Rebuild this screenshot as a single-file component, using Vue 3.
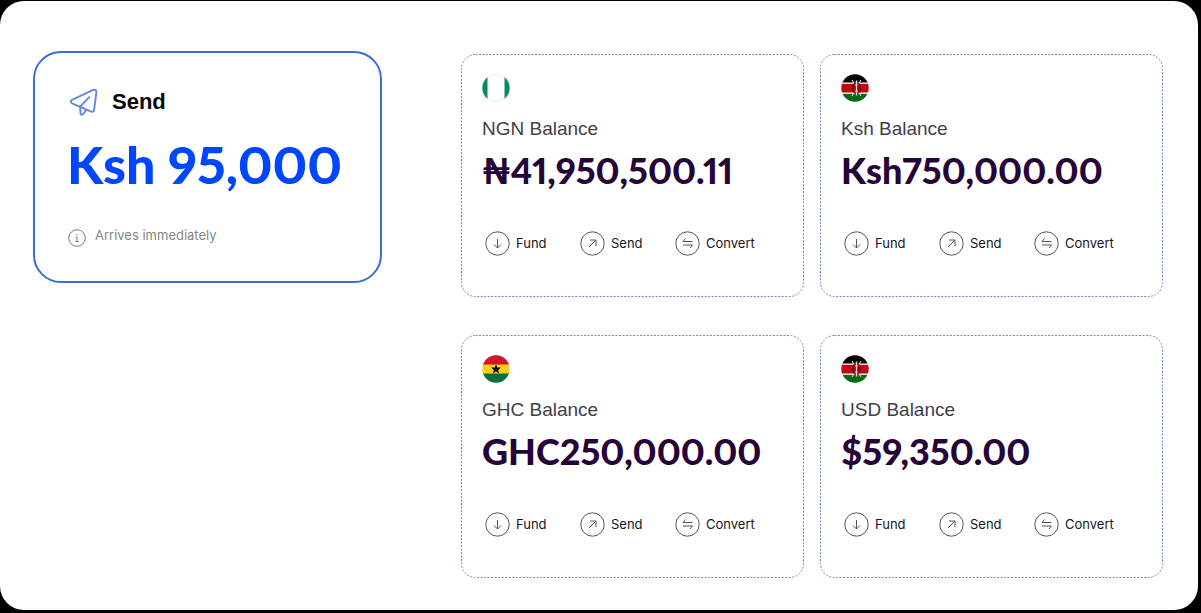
<script setup>
const accounts = [
  { id: 'ngn', flag: 'ng', label: 'NGN Balance', amount: '₦41,950,500.11' },
  { id: 'ksh', flag: 'ke', label: 'Ksh Balance', amount: 'Ksh750,000.00' },
  { id: 'ghc', flag: 'gh', label: 'GHC Balance', amount: 'GHC250,000.00' },
  { id: 'usd', flag: 'ke', label: 'USD Balance', amount: '$59,350.00' },
]

const actions = [
  { name: 'Fund', path: 'M12.5 8v9M9 13.500l3.500 3.500 3.500-3.500' },
  { name: 'Send', path: 'M9 16l7-7M10 9h6v6' },
  { name: 'Convert', path: 'M10.500 7.500L8 10.500h9.500M15 17l2.500-3H8' },
]
</script>

<template>
  <main class="panel">
    <section class="send-card">
      <h2 class="send-title">
        <svg class="plane" viewBox="0 0 30 30" aria-hidden="true">
          <path d="M3.2 12.2L24.5 2.1Q28.4.7 28.3 4.8L26 22.500Q25.600 25 23 24.500L3.200 16Q.5 14 3.200 12.200Z" />
          <path d="M21 9.500L11.500 19.200L12 26.500Q12.800 28.800 14.500 27L18 22.500" />
        </svg>
        Send
      </h2>
      <p class="send-amount">Ksh 95,000</p>
      <p class="send-note">
        <svg class="info" viewBox="0 0 18 18" aria-hidden="true">
          <circle cx="9" cy="9" r="8.300" />
          <path d="M7.700 8H9v4.500M7.500 12.500h3.200M9 5v1.300" />
        </svg>
        <span>Arrives immediately</span>
      </p>
    </section>

    <section class="accounts">
      <article v-for="a in accounts" :key="a.id" class="account">
        <svg class="outline" aria-hidden="true"><rect x=".5" y=".5" rx="14" /></svg>
        <svg class="flag" viewBox="0 0 28 28" aria-hidden="true">
          <defs>
            <clipPath :id="'round-' + a.id"><circle cx="14" cy="14" r="13.700" /></clipPath>
          </defs>
          <g v-if="a.flag === 'ng'" :clip-path="`url(#round-${a.id})`">
            <rect width="28" height="28" fill="#fff" />
            <rect width="5.500" height="28" fill="#0c8a5c" />
            <rect x="22.500" width="5.500" height="28" fill="#0c8a5c" />
            <path d="M5.500 3.500Q14-2.700 22.500 3.500M5.500 24.500Q14 30.700 22.500 24.500" fill="none" stroke="#e6e4e6" />
          </g>
          <g v-else-if="a.flag === 'gh'" :clip-path="`url(#round-${a.id})`">
            <rect width="28" height="10" fill="#d0142c" />
            <rect y="9.500" width="28" height="9.500" fill="#fcd019" />
            <rect y="18.500" width="28" height="9.500" fill="#0b6e42" />
            <path d="M14 9l1.300 3.600h3.800l-3 2.300 1.100 3.700-3.200-2.200-3.200 2.200 1.100-3.700-3-2.300h3.800z" fill="#111" />
          </g>
          <g v-else :clip-path="`url(#round-${a.id})`">
            <rect width="28" height="9" fill="#050505" />
            <rect y="8.500" width="28" height="11.500" fill="#fff" />
            <rect y="9.800" width="28" height="8.700" fill="#c00812" />
            <rect y="19.800" width="28" height="9" fill="#0b6814" />
            <path d="M11 6l2 3.500M20 6l-2 3.500M13 18.500l-2 3.500M18 18.500l2 3.500" stroke="#e8dede" stroke-width="1" />
            <ellipse cx="15.500" cy="14" rx="3.200" ry="7" fill="#9c0710" />
            <path d="M12.500 9.500q-1.200 4.500 0 9M18.500 9.500q1.200 4.500 0 9" fill="none" stroke="#4b0508" stroke-width="1" />
            <path d="M15.500 6.500v15" stroke="#f6dcdc" stroke-width="1.300" />
            <path d="M14 11h3M14 17h3" stroke="#f6dcdc" stroke-width=".8" />
          </g>
        </svg>
        <h3 class="label">{{ a.label }}</h3>
        <p class="amount">{{ a.amount }}</p>
        <div class="actions">
          <button v-for="act in actions" :key="act.name" type="button" class="action">
            <svg class="action-icon" viewBox="0 0 25 25" aria-hidden="true">
              <circle cx="12.500" cy="12.500" r="11.700" />
              <path :d="act.path" />
            </svg>
            {{ act.name }}
          </button>
        </div>
      </article>
    </section>
  </main>
</template>

<style>
body {
  margin: 0;
  background: #000;
}
</style>

<style scoped>
.panel {
  display: grid;
  grid-template-columns: 349fr 702fr;
  align-items: start;
  gap: 79px;
  box-sizing: border-box;
  margin: 1px 3px 3px 0;
  padding: 50px 35px 32px 33px;
  border-radius: 24px;
  background: #fff;
  font-family: Inter, "Liberation Sans", sans-serif;
}
h2, h3, p {
  margin: 0;
}
.send-card {
  min-width: 0;
  padding: 34px;
  border: 2px solid #3c6cd8;
  border-radius: 28px;
}
.send-title {
  display: flex;
  align-items: center;
  gap: 14px;
  color: #050505;
  font: 700 22px/30px "Liberation Sans", sans-serif;
}
.plane {
  width: 29px;
  height: 29px;
  fill: none;
  stroke: #6688dc;
  stroke-width: 2;
  stroke-linecap: round;
  stroke-linejoin: round;
}
.send-amount {
  margin: 15px 0 0 -2px;
  color: #0046ff;
  font: 900 52px/64px Lato, sans-serif;
  font-variant-numeric: proportional-nums;
  white-space: nowrap;
}
.send-note {
  display: flex;
  gap: 9px;
  margin: 31px 0 0 -1px;
  color: #858585;
  font-size: 13px;
  line-height: 16px;
}
.info {
  width: 18px;
  height: 18px;
  margin-top: 2px;
  fill: none;
  stroke: #777;
}
.accounts {
  min-width: 0;
  display: grid;
  grid-template-columns: 1fr 1fr;
  gap: 38px 16px;
  padding-top: 3px;
}
.account {
  position: relative;
  min-width: 0;
  padding: 20px 20px 41px 21px;
}
.outline {
  position: absolute;
  inset: 0;
  width: 100%;
  height: 100%;
  pointer-events: none;
}
.outline rect {
  width: calc(100% - 1px);
  height: calc(100% - 1px);
  fill: none;
  stroke: #6f88c4;
  stroke-dasharray: 2 1.5;
}
.flag {
  display: block;
  width: 28px;
  height: 28px;
}
.label {
  margin-top: 14px;
  color: #3e4147;
  font: 400 19px/26px "Liberation Sans", sans-serif;
}
.amount {
  margin-top: 7px;
  color: #260338;
  font: 900 36px/42px Lato, sans-serif;
  font-variant-numeric: proportional-nums;
  white-space: nowrap;
}
.actions {
  display: grid;
  grid-template-columns: 95px 95px 1fr;
  margin: 40px 0 0 3px;
}
.action {
  display: flex;
  align-items: center;
  gap: 6px;
  padding: 0;
  border: 0;
  background: none;
  color: #161616;
  font: 400 13px/25px Inter, sans-serif;
  cursor: pointer;
}
.action-icon {
  width: 25px;
  height: 25px;
  fill: none;
  stroke: #555;
}
</style>
